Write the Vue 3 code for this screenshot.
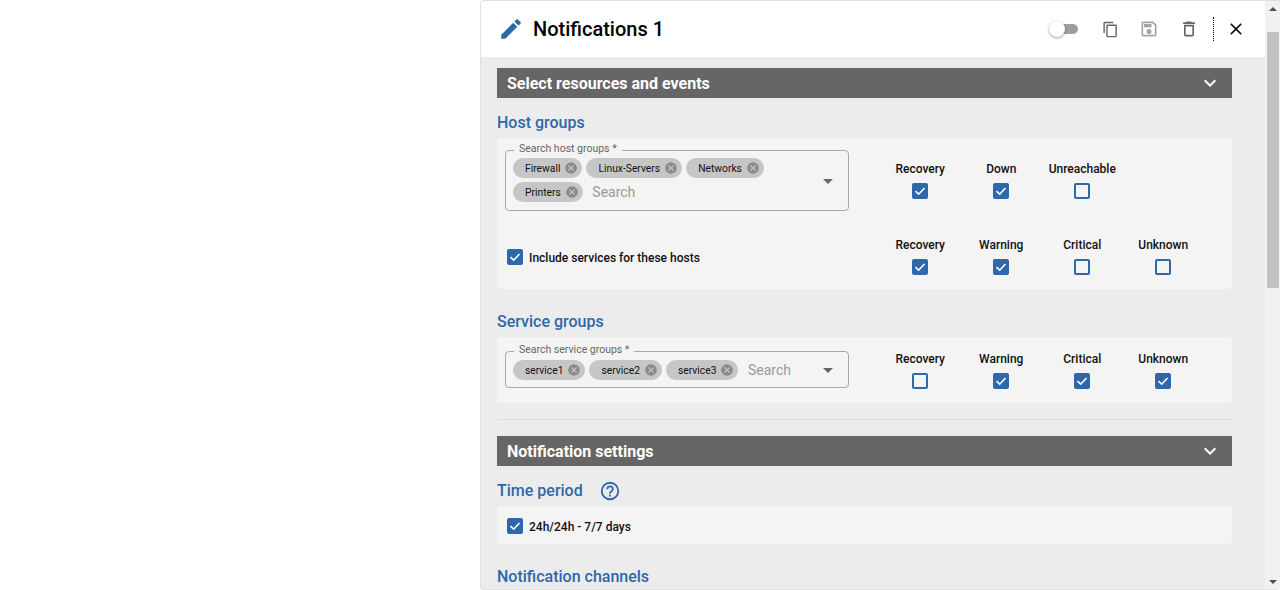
<script setup>
const hostChips = ["Firewall", "Linux-Servers", "Networks", "Printers"];
const serviceChips = ["service1", "service2", "service3"];

const hostEvents = [
  { name: "Recovery", on: true },
  { name: "Down", on: true },
  { name: "Unreachable", on: false },
];
const hostServiceEvents = [
  { name: "Recovery", on: true },
  { name: "Warning", on: true },
  { name: "Critical", on: false },
  { name: "Unknown", on: false },
];
const serviceEvents = [
  { name: "Recovery", on: false },
  { name: "Warning", on: true },
  { name: "Critical", on: true },
  { name: "Unknown", on: true },
];
</script>

<template>
  <div class="page">
    <div class="panel">
      <div class="main">
        <header class="top">
          <svg class="pencil" viewBox="0 0 24 24"><path d="M3 17.25V21h3.75L17.81 9.94l-3.75-3.75L3 17.25zM20.71 7.04a1 1 0 0 0 0-1.41l-2.34-2.34a1 1 0 0 0-1.41 0l-1.83 1.83 3.75 3.75 1.83-1.83z" /></svg>
          <h1 class="title">Notifications 1</h1>
          <div class="actions">
            <span class="toggle"><span class="knob"></span></span>
            <svg class="act copy" viewBox="0 0 24 24"><path d="M16 1H4a2 2 0 0 0-2 2v14h2V3h12V1zm3 4H8a2 2 0 0 0-2 2v14a2 2 0 0 0 2 2h11a2 2 0 0 0 2-2V7a2 2 0 0 0-2-2zm0 16H8V7h11v14z" /></svg>
            <svg class="act save" viewBox="0 0 24 24"><path d="M17 3H5a2 2 0 0 0-2 2v14a2 2 0 0 0 2 2h14a2 2 0 0 0 2-2V7l-4-4zm2 16H5V5h11.17L19 7.83V19zm-7-7a3 3 0 1 0 0 6 3 3 0 0 0 0-6zM6 6h9v4H6V6z" /></svg>
            <svg class="act trash" viewBox="0 0 24 24"><path d="M6 19a2 2 0 0 0 2 2h8a2 2 0 0 0 2-2V7H6v12zM8 9h8v10H8V9zm7.5-5-1-1h-5l-1 1H5v2h14V4h-3.5z" /></svg>
            <span class="sep"></span>
            <svg class="act close" viewBox="0 0 24 24"><path d="M19 6.41 17.59 5 12 10.59 6.41 5 5 6.41 10.59 12 5 17.59 6.41 19 12 13.41 17.59 19 19 17.59 13.41 12z" /></svg>
          </div>
        </header>

        <div class="content">
          <div class="bar">
            <span>Select resources and events</span>
            <svg viewBox="0 0 24 24"><path d="M7.41 8.59 12 13.17l4.59-4.58L18 10l-6 6-6-6z" /></svg>
          </div>

          <h2 class="heading host-heading">Host groups</h2>
          <section class="card host-card">
            <div class="row">
              <div class="field">
                <span class="legend">Search host groups *</span>
                <div class="chips">
                  <span v-for="c in hostChips" :key="c" class="chip">
                    {{ c }}
                    <svg viewBox="0 0 24 24"><path d="M12 2a10 10 0 1 0 0 20 10 10 0 0 0 0-20zm5 13.59L15.59 17 12 13.41 8.41 17 7 15.59 10.59 12 7 8.41 8.41 7 12 10.59 15.59 7 17 8.41 13.41 12z" /></svg>
                  </span>
                  <span class="search">Search</span>
                </div>
                <span class="caret"></span>
              </div>
              <div class="events first-events">
                <div v-for="e in hostEvents" :key="e.name" class="event">
                  <span class="event-name">{{ e.name }}</span>
                  <span class="box" :class="{ on: e.on }">
                    <svg v-if="e.on" viewBox="0 0 16 16"><path d="M3.5 8.2 6.7 11.2 12.5 5" /></svg>
                  </span>
                </div>
              </div>
            </div>
            <div class="row include-row">
              <label class="check">
                <span class="box on"><svg viewBox="0 0 16 16"><path d="M3.5 8.2 6.7 11.2 12.5 5" /></svg></span>
                <span class="check-text">Include services for these hosts</span>
              </label>
              <div class="events">
                <div v-for="e in hostServiceEvents" :key="e.name" class="event">
                  <span class="event-name">{{ e.name }}</span>
                  <span class="box" :class="{ on: e.on }">
                    <svg v-if="e.on" viewBox="0 0 16 16"><path d="M3.5 8.2 6.7 11.2 12.5 5" /></svg>
                  </span>
                </div>
              </div>
            </div>
          </section>

          <h2 class="heading service-heading">Service groups</h2>
          <section class="card service-card">
            <div class="row">
              <div class="field single">
                <span class="legend">Search service groups *</span>
                <div class="chips">
                  <span v-for="c in serviceChips" :key="c" class="chip">
                    {{ c }}
                    <svg viewBox="0 0 24 24"><path d="M12 2a10 10 0 1 0 0 20 10 10 0 0 0 0-20zm5 13.59L15.59 17 12 13.41 8.41 17 7 15.59 10.59 12 7 8.41 8.41 7 12 10.59 15.59 7 17 8.41 13.41 12z" /></svg>
                  </span>
                  <span class="search">Search</span>
                </div>
                <span class="caret"></span>
              </div>
              <div class="events service-events">
                <div v-for="e in serviceEvents" :key="e.name" class="event">
                  <span class="event-name">{{ e.name }}</span>
                  <span class="box" :class="{ on: e.on }">
                    <svg v-if="e.on" viewBox="0 0 16 16"><path d="M3.5 8.2 6.7 11.2 12.5 5" /></svg>
                  </span>
                </div>
              </div>
            </div>
          </section>

          <hr class="divider" />

          <div class="bar">
            <span>Notification settings</span>
            <svg viewBox="0 0 24 24"><path d="M7.41 8.59 12 13.17l4.59-4.58L18 10l-6 6-6-6z" /></svg>
          </div>

          <h2 class="heading time-heading">
            Time period
            <svg viewBox="0 0 24 24"><path d="M11 18h2v-2h-2v2zm1-16a10 10 0 1 0 0 20 10 10 0 0 0 0-20zm0 18a8 8 0 1 1 0-16 8 8 0 0 1 0 16zm0-14a4 4 0 0 0-4 4h2a2 2 0 1 1 4 0c0 2-3 1.75-3 5h2c0-2.25 3-2.5 3-5a4 4 0 0 0-4-4z" /></svg>
          </h2>
          <section class="card time-card">
            <label class="check">
              <span class="box on"><svg viewBox="0 0 16 16"><path d="M3.5 8.2 6.7 11.2 12.5 5" /></svg></span>
              <span class="check-text">24h/24h - 7/7 days</span>
            </label>
          </section>

          <h2 class="heading channel-heading">Notification channels</h2>
        </div>
      </div>

      <div class="scrollbar">
        <span class="arrow up"></span>
        <span class="track"><span class="thumb"></span></span>
        <span class="arrow down"></span>
      </div>
    </div>
  </div>
</template>

<style scoped>
.page {
  height: 590px;
  padding-left: 480px;
  box-sizing: border-box;
  overflow: hidden;
  font-family: Roboto, "Liberation Sans", sans-serif;
}

.panel {
  height: 590px;
  box-sizing: border-box;
  display: flex;
  background: #ececec;
  border: 1px solid #e0e0e0;
  border-right: none;
  border-top-left-radius: 4px;
  border-bottom-left-radius: 4px;
  border-bottom-right-radius: 4px;
  overflow: hidden;
}

.main {
  flex: 1;
  min-width: 0;
  display: flex;
  flex-direction: column;
}

.top {
  height: 56px;
  flex: none;
  display: flex;
  align-items: center;
  background: #fff;
  padding-left: 17px;
}

.pencil {
  width: 26px;
  height: 26px;
  fill: #2e68aa;
}

.title {
  margin: 0 0 0 9px;
  font-size: 20px;
  font-weight: 500;
  color: #000;
}

.actions {
  margin-left: auto;
  display: flex;
  align-items: center;
  padding-right: 19px;
}

.toggle {
  position: relative;
  width: 23px;
  height: 10px;
  margin-right: 24px;
  border-radius: 5px;
  background: #9e9e9e;
}

.knob {
  position: absolute;
  left: -6px;
  top: -3px;
  width: 16px;
  height: 16px;
  border-radius: 50%;
  background: #fff;
  box-shadow: 0 1px 3px rgba(0, 0, 0, 0.4);
}

.act {
  width: 18px;
  height: 18px;
  fill: #666;
}

.copy {
  width: 17px;
  height: 17px;
}

.save {
  width: 20px;
  height: 20px;
  margin-left: 20px;
  fill: #a3a3a3;
}

.trash {
  width: 20px;
  height: 20px;
  margin-left: 20px;
}

.sep {
  height: 24px;
  margin-left: 14px;
  border-left: 1px dotted #000;
}

.close {
  width: 20px;
  height: 20px;
  margin-left: 12px;
  fill: #111;
}

.content {
  flex: 1;
  min-height: 0;
  overflow: hidden;
  padding: 11px 33px 0 16px;
}

.bar {
  height: 30px;
  display: flex;
  align-items: center;
  justify-content: space-between;
  padding: 0 10px;
  background: #666;
  color: #fff;
  font-size: 16px;
  font-weight: 700;
}

.bar svg {
  width: 24px;
  height: 24px;
  fill: #fff;
}

.heading {
  margin: 0;
  color: #2e68aa;
  font-size: 16px;
  font-weight: 500;
  line-height: 20px;
}

.host-heading {
  margin-top: 15px;
}

.service-heading {
  margin-top: 23px;
}

.time-heading {
  margin-top: 14px;
  display: flex;
  align-items: center;
}

.time-heading svg {
  width: 22px;
  height: 22px;
  margin-left: 16px;
  fill: #2e68aa;
}

.channel-heading {
  margin-top: 23px;
}

.card {
  background: #f4f4f4;
  border-radius: 4px;
  padding: 0 8px;
}

.host-card {
  margin-top: 5px;
  height: 151px;
  padding-top: 12px;
  box-sizing: border-box;
}

.service-card {
  margin-top: 5px;
  height: 66px;
  padding-top: 14px;
  box-sizing: border-box;
}

.time-card {
  margin-top: 4px;
  height: 38px;
  box-sizing: border-box;
  display: flex;
  align-items: center;
  padding: 1px 0 0 10px;
}

.row {
  display: flex;
  align-items: flex-start;
}

.include-row {
  margin-top: 27px;
  align-items: center;
}

.include-row .check {
  width: 374px;
  padding-left: 2px;
  box-sizing: border-box;
  flex: none;
}

.field {
  position: relative;
  width: 344px;
  flex: none;
  box-sizing: border-box;
  border: 1px solid #a8a8a8;
  border-radius: 4px;
  padding: 7px 40px 8px 7px;
}

.field.single {
  padding-top: 8px;
  padding-bottom: 7px;
}

.legend {
  position: absolute;
  top: -9px;
  left: 8px;
  padding: 0 5px;
  background: #f4f4f4;
  color: #666;
  font-size: 10.5px;
  line-height: 13px;
}

.chips {
  display: flex;
  flex-wrap: wrap;
  align-items: center;
  gap: 4px;
}

.chip {
  height: 20px;
  display: inline-flex;
  align-items: center;
  padding: 0 4px 0 12px;
  border-radius: 10px;
  background: #c6c6c6;
  color: #111;
  font-size: 10.3px;
}

.chip svg {
  width: 14px;
  height: 14px;
  margin-left: 4px;
  fill: #8a8a8a;
}

.search {
  margin-left: 5.5px;
  color: #999;
  font-size: 14px;
  line-height: 20px;
}

.caret {
  position: absolute;
  right: 15px;
  top: 50%;
  margin-top: -2px;
  border-left: 5px solid transparent;
  border-right: 5px solid transparent;
  border-top: 5px solid #666;
}

.events {
  display: flex;
  margin-left: 30px;
}

.first-events {
  padding-top: 12px;
}

.service-events {
  padding-top: 1px;
}

.event {
  width: 81px;
  display: flex;
  flex-direction: column;
  align-items: center;
  gap: 7px;
}

.event-name {
  padding-left: 1.5px;
  font-size: 12px;
  font-weight: 500;
  line-height: 14px;
  color: #111;
  white-space: nowrap;
}

.include-row .events {
  margin-left: 0;
}

.box {
  width: 16px;
  height: 16px;
  box-sizing: border-box;
  display: block;
  flex: none;
  border: 2px solid #2e68aa;
  border-radius: 2px;
}

.box.on {
  background: #2e68aa;
  border: none;
}

.box svg {
  display: block;
  width: 16px;
  height: 16px;
  fill: none;
  stroke: #fff;
  stroke-width: 1.6;
}

.check {
  display: flex;
  align-items: center;
  gap: 6px;
  font-size: 12px;
  font-weight: 500;
  color: #111;
}

.check-text {
  padding-top: 2px;
}

.divider {
  margin: 16px 0;
  border: none;
  border-top: 1px solid #dedede;
}

.scrollbar {
  width: 15px;
  flex: none;
  display: flex;
  flex-direction: column;
  align-items: center;
  background: #f1f1f1;
}

.arrow {
  flex: none;
  width: 0;
  height: 0;
  border-left: 4px solid transparent;
  border-right: 4px solid transparent;
}

.arrow.up {
  margin-top: 6px;
  border-bottom: 4px solid #505050;
}

.arrow.down {
  margin-bottom: 5px;
  border-top: 4px solid #505050;
}

.track {
  flex: 1;
  align-self: stretch;
  padding-top: 21px;
}

.thumb {
  display: block;
  height: 256px;
  margin-left: 2px;
  margin-right: 1px;
  background: #c1c1c1;
}
</style>

<style>
html,
body {
  margin: 0;
  background: #fff;
}
</style>
